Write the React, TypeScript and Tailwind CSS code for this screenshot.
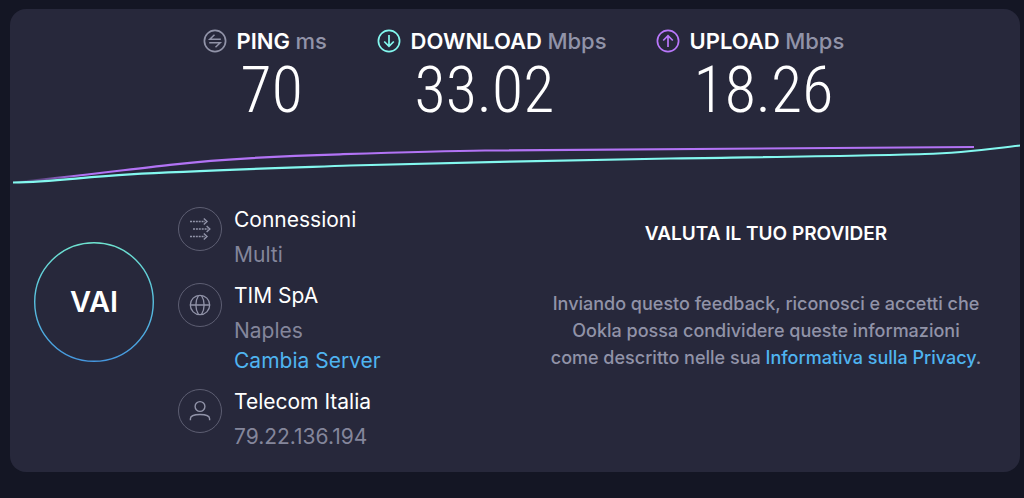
import type { ReactNode } from "react";

function PingIcon() {
  return (
    <svg viewBox="0 0 24 24" className="size-6 shrink-0" fill="none" stroke="#9193a8" strokeWidth="1.7" aria-hidden="true">
      <circle cx="12" cy="12" r="10.6" />
      <path d="M17.800 10.200H6.800L11.500 5.800M6.200 13.800h11L12.500 18.200" strokeWidth="1.500" />
    </svg>
  );
}

function DownloadIcon() {
  return (
    <svg viewBox="0 0 24 24" className="size-6 shrink-0" fill="none" stroke="#83f8ef" strokeWidth="1.7" aria-hidden="true">
      <circle cx="12" cy="12" r="10.6" />
      <path d="M12 6v11.2M7.2 12.5l4.8 4.8 4.8-4.8" />
    </svg>
  );
}

function UploadIcon() {
  return (
    <svg viewBox="0 0 24 24" className="size-6 shrink-0" fill="none" stroke="#b977fb" strokeWidth="1.7" aria-hidden="true">
      <circle cx="12" cy="12" r="10.6" />
      <path d="M12 18V6.8M7.2 11.5L12 6.7l4.8 4.8" />
    </svg>
  );
}

interface MetricProps {
  icon: ReactNode;
  label: string;
  unit: string;
  value: string;
  width: string;
}

function Metric({ icon, label, unit, value, width }: MetricProps) {
  return (
    <div className={`flex gap-2.5 ${width}`}>
      <div className="flex h-8 items-center">{icon}</div>
      <div className="whitespace-nowrap">
        <h2 className="text-[22px] leading-8 font-semibold text-white">
          {label} <span className="font-medium text-[#9193a8]">{unit}</span>
        </h2>
        <p className="pl-1 font-['Roboto_Condensed','Roboto',sans-serif] text-[64px] leading-[68px] font-light text-white">
          {value}
        </p>
      </div>
    </div>
  );
}

function SpeedChart() {
  return (
    <svg viewBox="0 0 1010 50" preserveAspectRatio="none" className="block h-[50px] w-full" fill="none" strokeWidth="2.2" role="img" aria-label="Download e upload">
      <defs>
        <linearGradient id="upload" gradientUnits="userSpaceOnUse" x1="4" y1="0" x2="70" y2="0">
          <stop offset="0" stopColor="#b273f5" stopOpacity="0" />
          <stop offset="1" stopColor="#b273f5" />
        </linearGradient>
      </defs>
      <path stroke="url(#upload)" d="M3 42.500C50 38 110 30.500 160 24.800C215 18.800 270 16 330 14.300C400 12 430 11 475 10.500C560 9 710 8.500 964 7" />
      <path stroke="#83f8ef" d="M3 42.500C45 42 70 37 120 34.300C190 30.500 270 28 340 25.500C440 23 560 20 660 18.500C760 17 850 16 915 14C955 13 980 9 1010 5.500" />
    </svg>
  );
}

function ConnectionsIcon() {
  return (
    <svg viewBox="0 0 24 24" className="size-6" fill="none" stroke="#9193a8" strokeWidth="1.400" aria-hidden="true">
      <path d="M2 4.500h15M5 12h15M2 19.500h15" strokeDasharray="2 0.900" />
      <path d="M15.800 1.600l3.200 2.900-3.200 2.900M18.600 9.100l3.200 2.900-3.200 2.900M15.800 16.600l3.200 2.900-3.200 2.900" />
    </svg>
  );
}

function GlobeIcon() {
  return (
    <svg viewBox="0 0 24 24" className="size-6" fill="none" stroke="#9193a8" strokeWidth="1.300" aria-hidden="true">
      <circle cx="12" cy="12" r="9.700" />
      <path d="M2.300 12h19.400M10.500 2.500C7 8 7 16 10.500 21.500M13.500 2.500C17 8 17 16 13.500 21.500" />
    </svg>
  );
}

function PersonIcon() {
  return (
    <svg viewBox="0 0 24 24" className="size-6" fill="none" stroke="#9193a8" strokeWidth="1.400" aria-hidden="true">
      <circle cx="12" cy="7.500" r="4.900" />
      <path d="M2.400 21.200v-1.500c0-2.600 3.800-4.200 9.600-4.200s9.600 1.600 9.600 4.200v1.500" />
    </svg>
  );
}

interface DetailProps {
  icon: ReactNode;
  title: string;
  text: string;
  children?: ReactNode;
}

function Detail({ icon, title, text, children }: DetailProps) {
  return (
    <li className="flex gap-3">
      <div className="mt-[5px] flex size-11 shrink-0 items-center justify-center rounded-full border border-[#5d5e72]">
        {icon}
      </div>
      <div className="text-[21px]">
        <h3 className="leading-[35px] text-white">{title}</h3>
        <p className="leading-[35px] text-[#84869b]">{text}</p>
        {children}
      </div>
    </li>
  );
}

export default function App() {
  return (
    <div className="min-h-screen bg-[#141624] pt-[9px] pr-1 pb-[27px] pl-2.5 font-['Inter','Open_Sans',sans-serif]">
      <main className="rounded-2xl bg-[#27283b] pt-4 pb-[18px]">
        <section className="flex justify-center gap-[51px] pl-3.5">
          <Metric icon={<PingIcon />} label="PING" unit="ms" value="70" width="w-[123px]" />
          <Metric icon={<DownloadIcon />} label="DOWNLOAD" unit="Mbps" value="33.02" width="w-[228px]" />
          <Metric icon={<UploadIcon />} label="UPLOAD" unit="Mbps" value="18.26" width="w-[186px]" />
        </section>

        <div className="pt-[15px]">
          <SpeedChart />
        </div>

        <section className="flex pt-3 pl-6">
          <button type="button" className="mt-10 grid size-[120px] shrink-0 place-items-center">
            <svg viewBox="0 0 120 120" className="col-start-1 row-start-1 size-full" fill="none" aria-hidden="true">
              <defs>
                <linearGradient id="ring" x1="0" y1="0" x2="0" y2="1">
                  <stop offset="0" stopColor="#6ee2cf" />
                  <stop offset="0.5" stopColor="#58c0df" />
                  <stop offset="1" stopColor="#4597df" />
                </linearGradient>
              </defs>
              <circle cx="60" cy="60" r="59.300" stroke="url(#ring)" strokeWidth="1.400" />
            </svg>
            <span className="col-start-1 row-start-1 text-[29px] font-semibold text-white">VAI</span>
          </button>

          <ul className="ml-6 flex w-[310px] shrink-0 flex-col gap-1.5">
            <Detail icon={<ConnectionsIcon />} title="Connessioni" text="Multi" />
            <Detail icon={<GlobeIcon />} title="TIM SpA" text="Naples">
              <a href="#server" className="block pb-1 leading-[26px] text-[#4fb4f0]">Cambia Server</a>
            </Detail>
            <Detail icon={<PersonIcon />} title="Telecom Italia" text="79.22.136.194" />
          </ul>

          <div className="flex-1 pt-[18px] pl-6 text-center">
            <h2 className="text-[19px] leading-7 font-semibold text-white">VALUTA IL TUO PROVIDER</h2>
            <p className="pt-[42px] text-lg leading-[27px] font-medium text-[#9193a8]">
              <span className="block">Inviando questo feedback, riconosci e accetti che</span>
              <span className="block">Ookla possa condividere queste informazioni</span>
              <span className="block">
                come descritto nelle sua{" "}
                <a href="#privacy" className="text-[#4fb4f0]">Informativa sulla Privacy</a>.
              </span>
            </p>
          </div>
        </section>
      </main>
    </div>
  );
}
